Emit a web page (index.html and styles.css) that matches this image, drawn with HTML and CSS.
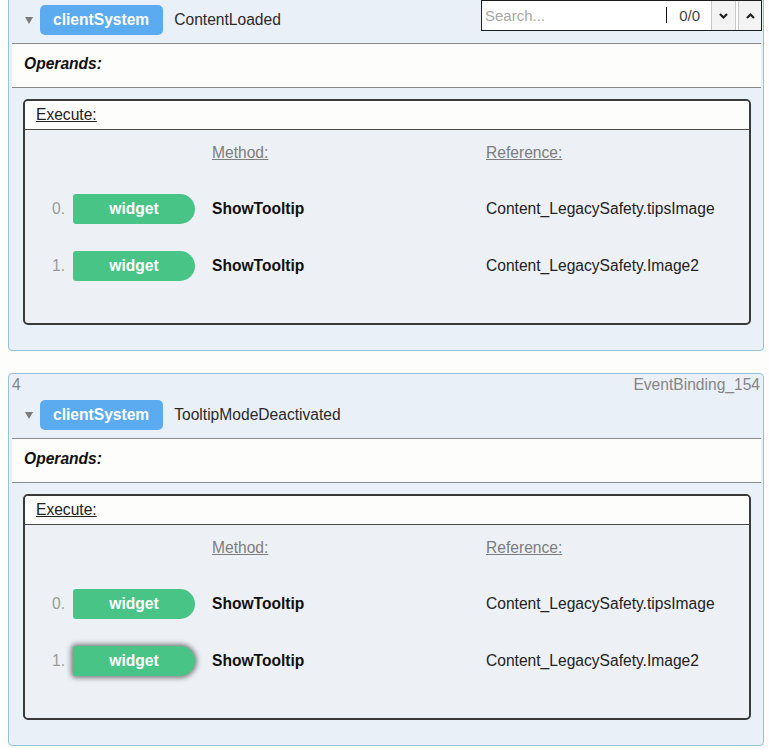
FILE: index.html
```html
<!DOCTYPE html>
<html lang="en">
<head>
<meta charset="utf-8">
<title>Event Bindings</title>
<link rel="stylesheet" href="styles.css">
</head>
<body>
<div class="page">
  <div class="search">
    <input class="search-input" type="text" placeholder="Search...">
    <span class="search-sep"></span>
    <span class="search-count">0/0</span>
    <button class="search-btn" aria-label="Next"><svg width="9" height="6" viewBox="0 0 9 6"><polyline points="1,1 4.5,4.5 8,1" fill="none" stroke="#222" stroke-width="2.2"/></svg></button>
    <button class="search-btn" aria-label="Previous"><svg width="9" height="6" viewBox="0 0 9 6"><polyline points="1,5 4.5,1.5 8,5" fill="none" stroke="#222" stroke-width="2.2"/></svg></button>
  </div>

  <section class="card card-first">
    <div class="card-top"><span>3</span><span>EventBinding_153</span></div>
    <div class="card-head">
      <svg class="tri" width="8" height="7" viewBox="0 0 8 7"><polygon points="0,0 8,0 4,7" fill="#7b7b7b"/></svg>
      <span class="badge">clientSystem</span>
      <span class="event">ContentLoaded</span>
    </div>
    <div class="operands">Operands:</div>
    <div class="exec">
      <div class="exec-title"><span>Execute:</span></div>
      <div class="exec-body">
        <div class="cols">
          <span class="col-head method-col">Method:</span>
          <span class="col-head ref-col">Reference:</span>
        </div>
        <div class="row"><span class="num">0.</span><span class="pill">widget</span><span class="method">ShowTooltip</span><span class="ref">Content_LegacySafety.tipsImage</span></div>
        <div class="row"><span class="num">1.</span><span class="pill">widget</span><span class="method">ShowTooltip</span><span class="ref">Content_LegacySafety.Image2</span></div>
      </div>
    </div>
  </section>

  <section class="card">
    <div class="card-top"><span>4</span><span>EventBinding_154</span></div>
    <div class="card-head">
      <svg class="tri" width="8" height="7" viewBox="0 0 8 7"><polygon points="0,0 8,0 4,7" fill="#7b7b7b"/></svg>
      <span class="badge">clientSystem</span>
      <span class="event">TooltipModeDeactivated</span>
    </div>
    <div class="operands">Operands:</div>
    <div class="exec">
      <div class="exec-title"><span>Execute:</span></div>
      <div class="exec-body">
        <div class="cols">
          <span class="col-head method-col">Method:</span>
          <span class="col-head ref-col">Reference:</span>
        </div>
        <div class="row"><span class="num">0.</span><span class="pill">widget</span><span class="method">ShowTooltip</span><span class="ref">Content_LegacySafety.tipsImage</span></div>
        <div class="row"><span class="num">1.</span><span class="pill pill-hover">widget</span><span class="method">ShowTooltip</span><span class="ref">Content_LegacySafety.Image2</span></div>
      </div>
    </div>
  </section>
</div>
</body>
</html>
```

FILE: styles.css
```css
html, body {
  margin: 0;
  padding: 0;
  background: #fdfdfc;
}

body {
  font-family: "Liberation Sans", Arial, sans-serif;
  font-size: 15.6px;
  color: #222;
  overflow: hidden;
}

.page {
  position: relative;
  display: flow-root;
  padding: 0 5px 0 8px;
}

/* Search overlay */
.search {
  position: absolute;
  top: 0;
  left: 481px;
  width: 281px;
  height: 31px;
  box-sizing: border-box;
  border: 1px solid #1e1e1e;
  background: #fff;
  display: flex;
  align-items: stretch;
  z-index: 5;
}

.search-input {
  flex: 1;
  min-width: 0;
  border: none;
  outline: none;
  background: transparent;
  font-family: "Liberation Sans", Arial, sans-serif;
  font-size: 15px;
  padding: 0 0 0 3px;
  margin: 0;
  color: #333;
}

.search-input::placeholder {
  color: #a8a8a8;
}

.search-sep {
  width: 1px;
  background: #111;
  margin: 6px 0 7px;
}

.search-count {
  display: flex;
  align-items: center;
  padding: 0 9px 0 12px;
  color: #444;
  font-size: 15px;
}

.search-btn {
  width: 25px;
  margin: 0 0 0 2px;
  padding: 0;
  border: 1px solid #c9c9c9;
  border-top: none;
  border-bottom: none;
  background: #f3f3f3;
  display: flex;
  align-items: center;
  justify-content: center;
}

.search-btn:last-child {
  border-right: none;
  width: 23px;
}

/* Cards */
.card {
  border: 1px solid #93c3d8;
  border-radius: 4px;
  background: #eaf0f7;
  margin-bottom: 22px;
}

.card-first {
  margin-top: -22px;
}

.card-top {
  height: 22px;
  display: flex;
  justify-content: space-between;
  align-items: center;
  padding: 0 3px 0 3px;
  color: #858585;
}

.card-head {
  display: flex;
  align-items: center;
  height: 30px;
  padding: 4px 0 8px 13px;
  margin: 0 2px 0 3px;
  border-bottom: 1px solid #8a8a8a;
}

.tri {
  display: block;
  margin-top: 1px;
}

.badge {
  margin-left: 7px;
  height: 30px;
  line-height: 30px;
  padding: 0 14px 0 13px;
  border-radius: 5px;
  background: #5aabf0;
  color: #fff;
  font-weight: bold;
}

.event {
  margin-left: 11px;
  color: #2a2a2a;
}

.operands {
  height: 43px;
  line-height: 40px;
  margin: 0 2px 0 3px;
  padding-left: 12px;
  background: #fdfdfb;
  border-bottom: 1px solid #8a8a8a;
  font-weight: bold;
  font-style: italic;
  color: #111;
}

.exec {
  margin: 11px 12px 25px 14px;
  border: 2px solid #3a3a3a;
  border-radius: 5px;
  overflow: hidden;
  background: #edf1f6;
}

.exec-title {
  height: 28px;
  line-height: 28px;
  padding-left: 11px;
  background: #fdfdfc;
  border-bottom: 1px solid #4a4a4a;
}

.exec-title span {
  text-decoration: underline;
  color: #222;
}

.exec-body {
  display: flex;
  flex-direction: column;
  padding: 14px 0 42px;
}

.cols,
.row {
  display: grid;
  grid-template-columns: 48px 139px 274px 1fr;
  align-items: center;
}

.cols {
  height: 18px;
  margin-bottom: 32px;
}

.row {
  height: 30px;
}

.row + .row {
  margin-top: 27px;
}

.col-head {
  color: #7d7d7d;
  text-decoration: underline;
  line-height: 18px;
}

.method-col {
  grid-column: 3;
}

.ref-col {
  grid-column: 4;
}

.num {
  grid-column: 1;
  text-align: right;
  padding-right: 8px;
  color: #9a9a9a;
}

.pill {
  grid-column: 2;
  width: 122px;
  height: 30px;
  line-height: 30px;
  text-align: center;
  background: #48c487;
  color: #fff;
  font-weight: bold;
  border-radius: 3px 15px 15px 3px;
}

.pill-hover {
  box-shadow: 0 0 5px 2px rgba(50, 50, 50, 0.6);
}

.method {
  grid-column: 3;
  font-weight: bold;
  color: #111;
}

.ref {
  grid-column: 4;
  color: #222;
}
```
